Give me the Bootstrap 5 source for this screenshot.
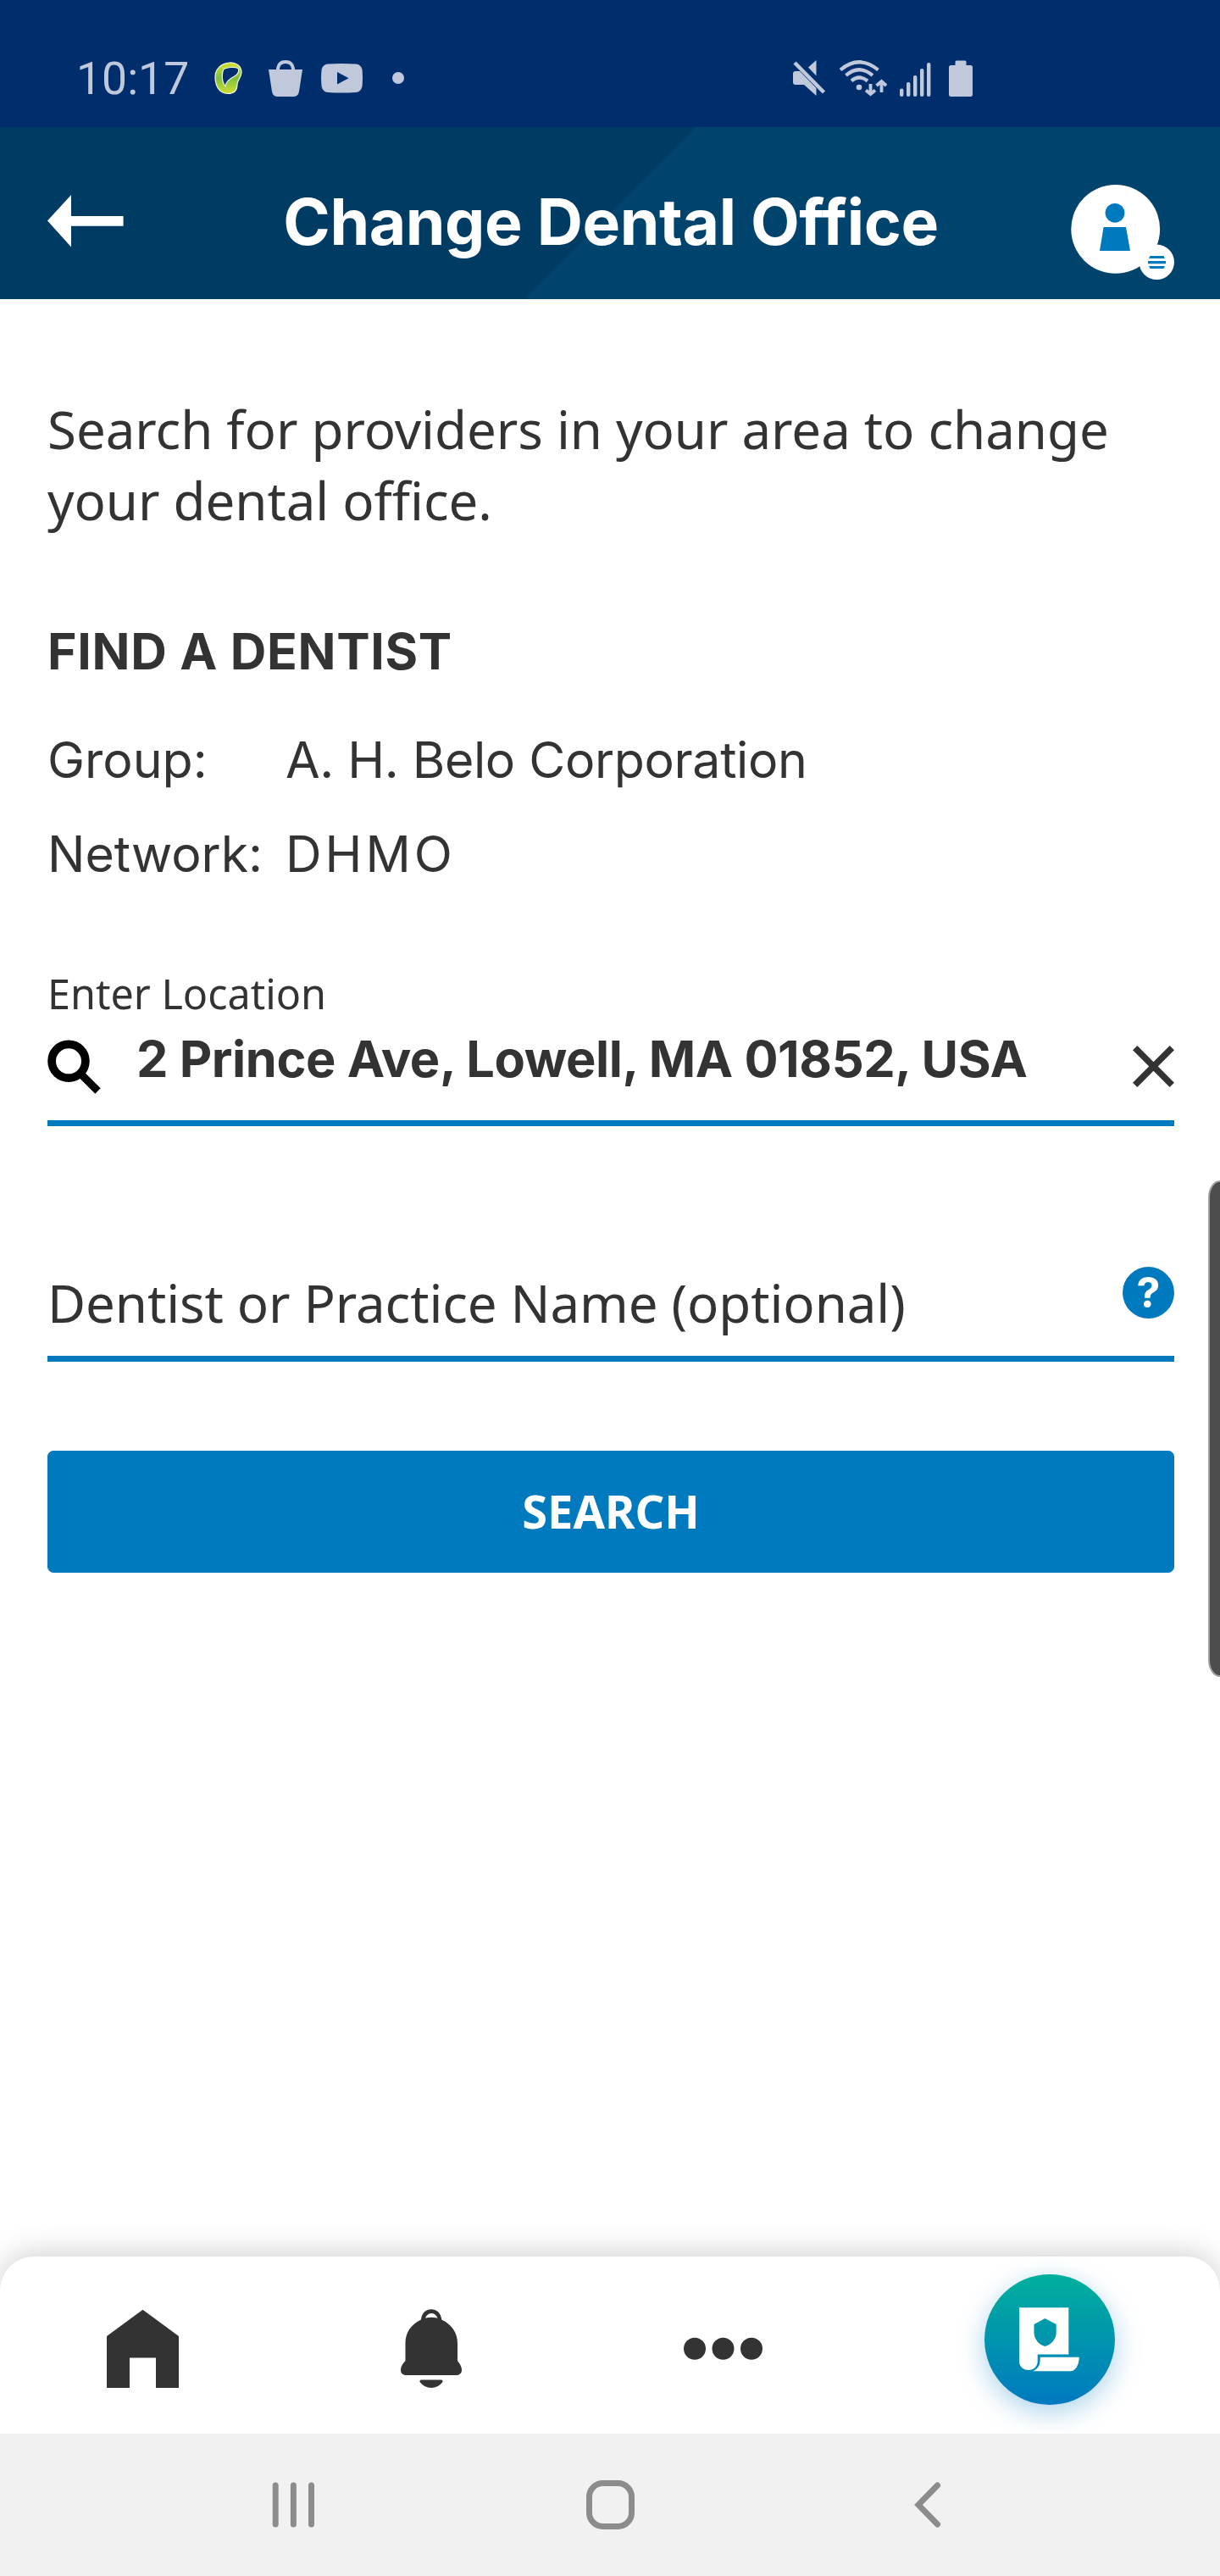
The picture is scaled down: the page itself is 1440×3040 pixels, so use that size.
<!DOCTYPE html>
<html lang="en">
<head>
<meta charset="utf-8">
<meta name="viewport" content="width=device-width, initial-scale=1">
<title>Change Dental Office</title>
<link href="https://cdn.jsdelivr.net/npm/bootstrap@5.3.0/dist/css/bootstrap.min.css" rel="stylesheet">
<style>
  :root { --brand: #007abf; --ink: #333; }
  body { margin: 0; background: #fff; color: var(--ink); font-family: "Noto Sans", sans-serif; overflow: hidden; }
  svg { display: block; flex: none; }
  .app { width: 1440px; height: 3040px; overflow: hidden; }
  .round-font { font-family: Inter, sans-serif; }

  .status { height: 150px; padding: 35px 0 0 90px; background: #002e6d; color: #bfc9db; }
  .clock { font: 400 53.5px/60px Roboto, sans-serif; width: 160px; }
  .status svg { fill: currentColor; }
  .gap-bag { margin-left: 24px; }
  .gap-video { margin-left: 22px; }
  .gap-dot { margin-left: 33px; }
  .gap-mute { margin-left: 456px; }
  .gap-wifi { margin-left: 12px; }
  .gap-signal { margin-left: 15px; }
  .gap-battery { margin-left: 21px; }

  .topbar { height: 203px; padding: 0 54px 0 56px; background: linear-gradient(135deg, #003b63 0 50%, #00436c 50%); }
  .topbar h1 { font-size: 75px; line-height: 90px; font-weight: 700; letter-spacing: -.4px; margin: 20px 0 0 32px; }
  .back-arrow { margin-top: 80px; }
  .avatar { margin-top: 65px; }

  main { padding: 111px 54px 0 56px; }
  .intro { font-size: 61.8px; line-height: 84px; letter-spacing: -.04px; }
  .section-title { font-size: 59px; line-height: 80px; font-weight: 700; letter-spacing: .7px; margin-top: 97px; }
  .facts { font-size: 59px; line-height: 110.5px; margin-top: 33px; }
  .facts dt { width: 281px; font-weight: 400; }
  .facts dd { margin: 0; font-weight: 400; letter-spacing: -.35px; }
  .facts .wide { letter-spacing: 4px; }
  .field-label { font-size: 48.5px; line-height: 60px; margin-top: 79px; }
  .field { border-bottom: 7px solid var(--brand); }
  .field-location { height: 127px; padding-top: 7px; }
  .field-location .value { font-size: 59.5px; line-height: 80px; font-weight: 700; margin-left: 40px; letter-spacing: -.42px; }
  .search-icon { margin-top: 18px; }
  .clear-icon { margin-top: 25px; }
  .field-name { height: 115px; margin-top: 163px; font-size: 61.8px; line-height: 90px; letter-spacing: -.08px; }
  .help { width: 61px; height: 61px; margin-top: 3px; background: var(--brand); font: 700 50px/61px Inter, sans-serif; }
  .btn-search { height: 144px; margin-top: 105px; border-radius: 7px; font-size: 54.2px; font-weight: 700; padding: 0;
    --bs-btn-bg: #007abf; --bs-btn-border-color: #007abf; --bs-btn-color: #fff; }

  .scroll-thumb { right: -14px; top: 1393px; width: 28px; height: 586px; border-radius: 14px / 20px; background: #4d4d4d; border: 2px solid #a0a0a0; }
  .tabs { height: 209px; background: #fff; border-radius: 40px 40px 0 0; box-shadow: 0 -4px 36px rgba(0,0,0,.19); }
  .tabs svg { fill: var(--ink); }
  .tab-home { margin: 62px 0 0 126px; }
  .tab-bell { margin: 62px 0 0 261px; }
  .tab-more { margin: 95px 0 0 261px; }
  .fab { width: 154px; height: 154px; margin: 21px 0 0 261px; background: linear-gradient(#00b09c, #0079c0); box-shadow: 0 9px 32px rgba(0,122,191,.33); }
  .tabs .fab svg { fill: #fff; }
  .sysbar { height: 168px; background: #f1f1f1; position: relative; z-index: 1; padding-left: 321px; }
  .sysbar svg { fill: none; stroke: #8c8c8c; stroke-width: 7; }
  .sys-home { margin-left: 320px; }
  .sys-back { margin-left: 328px; }
</style>
<script src="https://cdn.jsdelivr.net/npm/bootstrap@5.3.0/dist/js/bootstrap.bundle.min.js"></script>
</head>
<body>
<div class="app d-flex flex-column position-relative">

  <div class="status d-flex align-items-center">
    <span class="clock">10:17</span>
    <svg width="43" height="44" viewBox="250 70.5 43 44">
      <defs><linearGradient id="leaf" x1="0" y1="0" x2="0" y2="1"><stop offset="0" stop-color="#d5e32c"/><stop offset=".5" stop-color="#7ebf42"/><stop offset="1" stop-color="#cfe033"/></linearGradient></defs>
      <path fill="url(#leaf)" fill-rule="evenodd" stroke="#f3f8e0" stroke-width="1.2" d="M271 73.500C278 73 285 77 285 85C285 91 280 94 280 99C280 106 276 110 269 110C258 110 254 100 254 90C254 81 261 74 271 73.500ZM264 81C261 87 262 97 266 101C267 95 272 92 276 90C280 88 283 84 281 80C276 78 268 79 264 81Z"/>
    </svg>
    <svg class="gap-bag" width="40" height="44" viewBox="317 70 40 44">
      <path d="M317 81H357L353 107Q352 113 346 113H328Q322 113 321 107Z"/>
      <path d="M328 83V80Q329 72 337 72Q345 72 346 80V83" fill="none" stroke="currentColor" stroke-width="4"/>
    </svg>
    <svg class="gap-video" width="49" height="35" viewBox="379 74 49 35">
      <path fill-rule="evenodd" d="M387 74.500Q403 73.500 420 74.500Q426 75 427.500 81Q428.500 91 427.500 101Q426 107.500 420 108Q403 109 387 108Q381 107.500 379.600 101Q378.500 91 379.600 81Q381 75 387 74.500ZM398 84V98.500L411.500 91.300Z"/>
    </svg>
    <svg class="gap-dot" width="18" height="18" viewBox="461 82 18 18"><circle cx="470" cy="90" r="7"/></svg>
    <svg class="gap-mute" width="42" height="44" viewBox="935 69 42 44">
      <path d="M936 85Q936 82 939 82H944L963.500 102V111L949 98H939Q936 98 936 95ZM963.500 69V87.500L954 77.500Z"/>
      <path d="M938 72L972.500 107" stroke="currentColor" stroke-width="4.500"/>
    </svg>
    <svg class="gap-wifi" width="58" height="44" viewBox="989 69 58 44">
      <g fill="none" stroke="currentColor" stroke-width="4.200"><path d="M992 80.500Q1014 62 1036.500 80.500M998.500 87Q1014 73.500 1030 87M1005 93.500Q1014 85.500 1024 93.500"/><path d="M1027.500 97V108M1022 104.500L1027.500 109L1033 104.500M1040.500 107V95M1034.500 99L1040.500 94L1046 99" stroke-width="3.800"/></g>
      <circle cx="1014" cy="101" r="3.300"/>
    </svg>
    <svg class="gap-signal" width="37" height="44" viewBox="1062 69 37 44">
      <rect x="1062" y="102.500" width="4.400" height="9.500" rx="2"/><rect x="1070" y="95" width="4.400" height="17" rx="2"/><rect x="1078" y="87" width="4.400" height="25" rx="2"/><rect x="1086" y="79" width="4.400" height="33" rx="2"/><rect x="1094" y="72" width="4.400" height="40" rx="2"/>
    </svg>
    <svg class="gap-battery" width="28" height="44" viewBox="1120 69 28 44">
      <path d="M1127.500 75V71Q1127.500 69.500 1129 69.500H1139Q1140.500 69.500 1140.500 71V75H1145.500Q1148 75 1148 77.500V109.500Q1148 112 1145.500 112H1122.500Q1120 112 1120 109.500V77.500Q1120 75 1122.500 75Z"/>
    </svg>
  </div>

  <header class="topbar d-flex justify-content-between align-items-start text-white">
    <svg class="back-arrow" width="90" height="62" viewBox="56 230 90 62" fill="#fff"><path d="M56 260.500L84 230V255H145.600V266.700H84V291.500Z"/></svg>
    <h1 class="round-font align-self-center text-nowrap">Change Dental Office</h1>
    <svg class="avatar" width="122" height="116" viewBox="1264 215 122 116">
      <circle cx="1316.700" cy="270.400" r="52.400" fill="#fff"/><circle cx="1365.300" cy="309.300" r="20.700" fill="#fff"/>
      <g fill="#007abf"><circle cx="1316" cy="251.300" r="11.400"/><path d="M1302.600 268H1329L1334 296H1298Z"/>
      <path d="M1357.500 302H1373.500L1375 305H1356ZM1355 308H1376V311.200H1355ZM1356 314H1375L1373.500 317H1357.500Z"/></g>
    </svg>
  </header>

  <main class="flex-grow-1">
    <p class="intro mb-0">Search for providers in your area to change<br>your dental office.</p>
    <h2 class="section-title round-font mb-0">FIND A DENTIST</h2>
    <dl class="facts round-font mb-0">
      <div class="d-flex"><dt>Group:</dt><dd>A. H. Belo Corporation</dd></div>
      <div class="d-flex"><dt>Network:</dt><dd class="wide">DHMO</dd></div>
    </dl>
    <div class="field-label">Enter Location</div>
    <div class="field field-location d-flex align-items-start">
      <svg class="search-icon" width="65" height="64" viewBox="56 1227 65 64" fill="none" stroke="#000"><circle cx="81" cy="1252.300" r="19.900" stroke-width="9.700"/><path d="M95.500 1267.500L115.500 1287.500" stroke-width="9"/></svg>
      <span class="value round-font text-nowrap">2 Prince Ave, Lowell, MA 01852, USA</span>
      <svg class="clear-icon ms-auto" width="49" height="49" viewBox="0 0 49 49" stroke="#333" stroke-width="7.500"><path d="M2.700 2.700L46.300 46.300M46.300 2.700L2.700 46.300"/></svg>
    </div>
    <div class="field field-name d-flex align-items-start justify-content-between">
      <span>Dentist or Practice Name (optional)</span>
      <span class="help rounded-circle text-white text-center">?</span>
    </div>
    <button type="button" class="btn btn-search w-100">SEARCH</button>
  </main>

  <nav class="tabs d-flex align-items-start">
    <svg class="tab-home" width="86" height="94" viewBox="126 2725 86 94"><path d="M168.500 2725.700L211 2757V2818H184V2782.500H153V2818H126V2757Z"/></svg>
    <svg class="tab-bell" width="73" height="94" viewBox="473 2725 73 94">
      <path fill-rule="evenodd" d="M497 2737.500C498 2721 520 2721 521.300 2737.500C533 2743 540 2753 540 2765V2786C543 2790 545 2793 545 2797C545 2801 542 2803 538 2803H480C476 2803 473 2801 473 2797C473 2793 475 2790 478.500 2786V2765C478.500 2753 485 2743 497 2737.500ZM502 2735.700Q509 2734 516.500 2735.700C514 2728 504.500 2728 502 2735.700Z"/>
      <path d="M497 2808.500H521Q523.500 2809 522 2811.500Q517 2818 509 2818Q501 2818 496 2811.500Q494.500 2809 497 2808.500Z"/>
    </svg>
    <svg class="tab-more" width="94" height="28" viewBox="807 2758 94 28"><circle cx="820" cy="2771.800" r="13"/><circle cx="853.500" cy="2771.800" r="13"/><circle cx="887" cy="2771.800" r="13"/></svg>
    <div class="fab rounded-circle">
      <svg width="154" height="154" viewBox="0 0 154 154">
        <path fill-rule="evenodd" d="M41 39.300H99.300V94.600H62.700V102C62.700 109 58 113 52 113C46 113 41 109 41 102ZM71.500 52L58.500 59V69C58.500 76 64 83 71.500 85C79 83 84.700 76 84.700 69V59Z"/>
        <path d="M65.700 97.800H111.700C112 107 107 114.300 101.500 114.300H56.700C63 112 65.700 107 65.700 101Z"/>
      </svg>
    </div>
  </nav>

  <div class="sysbar d-flex align-items-center">
    <svg width="51" height="54" viewBox="321 2929.500 51 54" stroke-linecap="round"><path d="M325.200 2933.500V2979.500M346.400 2933.500V2979.500M367.500 2933.500V2979.500"/></svg>
    <svg class="sys-home" width="57" height="58" viewBox="0 0 57 58"><rect x="3.500" y="3.500" width="50" height="51" rx="16"/></svg>
    <svg class="sys-back" width="35" height="54" viewBox="1077 2929.500 35 54" stroke-linecap="round"><path d="M1106.500 2933.500L1084 2956.500L1106.500 2979.500"/></svg>
  </div>

  <div class="scroll-thumb position-absolute"></div>
</div>
</body>
</html>
